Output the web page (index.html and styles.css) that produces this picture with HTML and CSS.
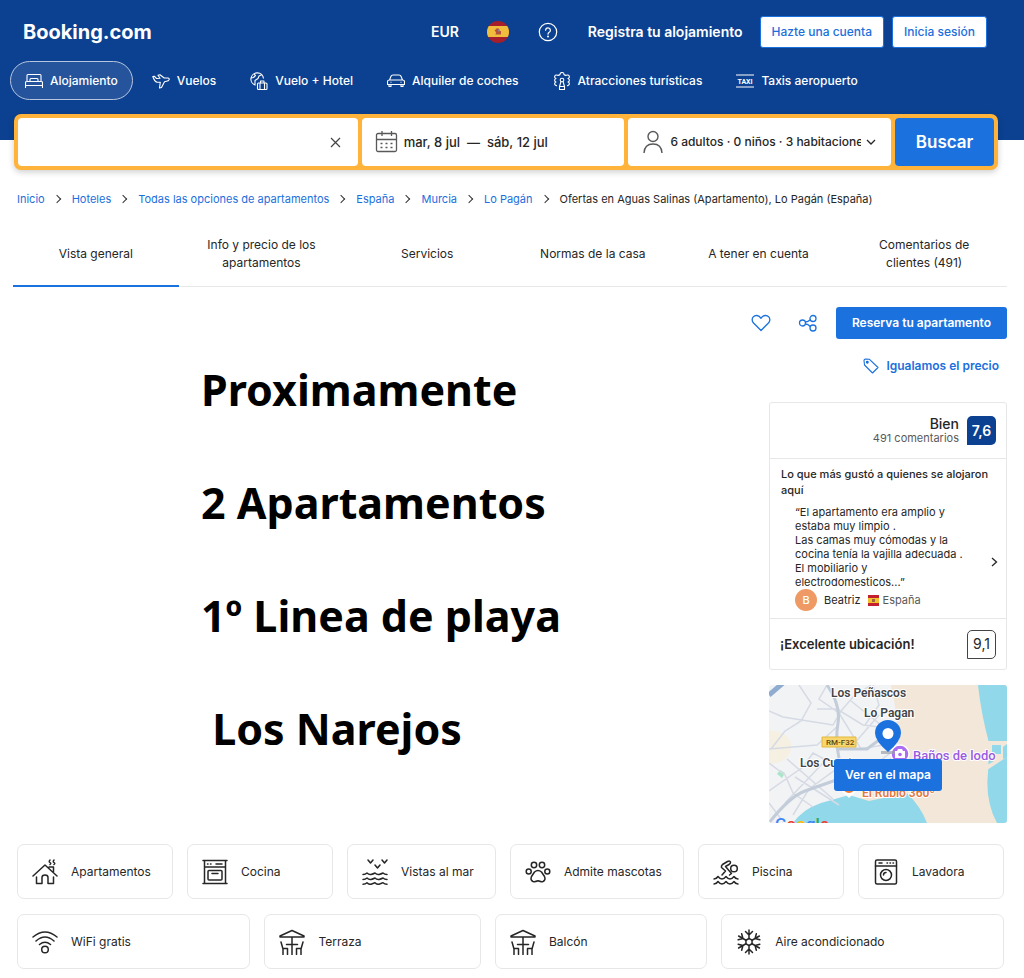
FILE: index.html
```html
<!DOCTYPE html>
<html lang="es">
<head>
<meta charset="utf-8">
<meta name="viewport" content="width=device-width, initial-scale=1">
<title>Aguas Salinas (Apartamento), Lo Pagán (España)</title>
<link rel="stylesheet" href="styles.css">
</head>
<body>
<header class="header">
  <div class="topbar">
    <a class="logo" href="#">Booking.com</a>
    <div class="topbar-actions">
      <button class="plain currency" type="button">EUR</button>
      <button class="plain flag-button" type="button" aria-label="Español">
        <svg width="22" height="22" viewBox="0 0 22 22"><defs><clipPath id="round"><circle cx="11" cy="11" r="11"/></clipPath></defs><g clip-path="url(#round)"><path fill="#a51e2b" d="M0 0h22v22H0z"/><path fill="#f0bd3c" d="M0 5h22v11H0z"/><path fill="#b5543a" d="M7.500 9l1 0 .5-1.500h3l.5 2.500h1.500v3.500H8.500l.5-2z"/><path fill="#8b8399" d="M11 8.500h1.500v2H11z"/></g></svg>
      </button>
      <button class="plain help" type="button" aria-label="Ayuda">
        <svg width="20" height="20" viewBox="0 0 20 20" fill="none" stroke="currentColor" stroke-width="1.2" stroke-linecap="round"><circle cx="10" cy="10" r="8.7"/><path d="M7.6 8.2a2.4 2.4 0 1 1 3.6 2.1c-.8.5-1.2.9-1.2 1.9"/><circle cx="10" cy="14.4" r=".4" fill="currentColor"/></svg>
      </button>
      <a class="register" href="#">Registra tu alojamiento</a>
      <div class="account">
        <a class="account-button" href="#">Hazte una cuenta</a>
        <a class="account-button" href="#">Inicia sesión</a>
      </div>
    </div>
  </div>
  <nav class="products" aria-label="Productos">
    <a class="product product-active" href="#"><svg class="icon-s" viewBox="0 0 18 18"><path d="M.5 16V10.500Q.5 9.500 1.500 9.500H16.500Q17.500 9.500 17.500 10.500V16M.5 13.500H17.500M2 9.500V3.500Q2 2.500 3 2.500H15Q16 2.500 16 3.500V9.500M5 9.500V7.500Q5 6.500 6 6.500H12Q13 6.500 13 7.500V9.500"/></svg>Alojamiento</a>
    <a class="product" href="#"><svg class="icon-s" viewBox="0 0 18 18"><path d="M.8 4.500L2.300 4.200L4.500 6.500L8 6.300L6 3.300L8 2.800L12.200 6L16 6Q17.500 6.300 17.200 7.500Q16.500 9 14.500 9.300L12.500 9.700L9.500 15.500L7.500 16L8.300 10.200L5 10.200Q2.500 9.500 .8 4.500Z"/></svg>Vuelos</a>
    <a class="product" href="#"><svg class="icon-s" viewBox="0 0 18 18"><path d="M5.500 13.200A6.300 6.300 0 1 1 13.500 6.500M4 1.800L5.500 3.500L3.500 5.500L1 6M12 2.500L9 4L8 6.500L5 8.500L5 12.500M8.500 11H16Q17 11 17 12V16.500Q17 17.500 16 17.500H8.500Q7.500 17.500 7.500 16.500V12Q7.500 11 8.500 11ZM10.500 11V9H14V11M10 11.500V17.500M14.500 11.500V17.500"/></svg>Vuelo + Hotel</a>
    <a class="product" href="#"><svg class="icon-s" viewBox="0 0 18 18"><path d="M2.500 8L4 4.300Q4.500 3 6 3H12Q13.500 3 14 4.300L15.500 8M2.500 8H15.500Q17.500 8 17.500 9.500V12.500H.5V9.500Q.5 8 2.500 8ZM2 12.500V14.500H4V12.500M14 12.500V14.500H16V12.500M3.500 10.300H4.500M13.500 10.300H14.500"/></svg>Alquiler de coches</a>
    <a class="product" href="#"><svg class="icon-s" viewBox="0 0 18 18"><path d="M4 13.500A1.800 1.800 0 1 1 3 10A1.800 1.800 0 0 1 3 6.500A1.800 1.800 0 1 1 4.500 3.300Q6 3.500 7 2.500A1.800 1.800 0 1 1 11 2.500Q12 3.500 13.500 3.300A1.800 1.800 0 1 1 15 6.500A1.800 1.800 0 0 1 15 10A1.800 1.800 0 1 1 14 13.500M8 9.500L6.500 14.500V17.500H11.500V14.500L10 9.500M6.500 14.500H11.500"/><circle cx="9" cy="8" r="1.800"/></svg>Atracciones turísticas</a>
    <a class="product" href="#"><svg class="icon-s" viewBox="0 0 18 18"><path d="M0 3H18M0 15H18"/><text x="9" y="12">TAXI</text></svg>Taxis aeropuerto</a>
  </nav>
</header>

<form class="search">
  <div class="field">
    <input class="destination" type="text" aria-label="Destino">
    <button class="plain clear" type="button" aria-label="Borrar"><svg width="11" height="11" viewBox="0 0 11 11" fill="none" stroke="currentColor" stroke-width="1.2"><path d="M1 1l9 9M10 1l-9 9"/></svg></button>
  </div>
  <button class="field field-button" type="button">
    <svg class="field-icon" width="24" height="24" viewBox="0 0 24 24" fill="none" stroke="currentColor" stroke-width="1.3"><rect x="1.500" y="3.500" width="20" height="18" rx="1.500"/><path d="M1.500 9.500h20M7 1v5M16.500 1v5M5.500 13.500h2M10.500 13.500h2M15.500 13.500h2M5.500 17.500h2M10.500 17.500h2M15.500 17.500h2"/></svg>
    <span>mar, 8 jul &nbsp;—&nbsp; sáb, 12 jul</span>
  </button>
  <button class="field field-button" type="button">
    <svg class="field-icon" width="24" height="24" viewBox="0 0 24 24" fill="none" stroke="currentColor" stroke-width="1.4"><circle cx="12" cy="6.500" r="5"/><path d="M3 23q.5-9 9-9t9 9"/></svg>
    <span class="guests">6 adultos · 0 niños · 3 habitaciones</span>
    <svg class="caret" width="10" height="6" viewBox="0 0 10 6" fill="none" stroke="currentColor" stroke-width="1.300"><path d="M1 1l4 4 4-4"/></svg>
  </button>
  <button class="search-submit" type="submit">Buscar</button>
</form>

<main class="page">
  <nav aria-label="Ruta">
    <ol class="breadcrumb">
      <li><a href="#">Inicio</a></li>
      <li><a href="#">Hoteles</a></li>
      <li><a href="#">Todas las opciones de apartamentos</a></li>
      <li><a href="#">España</a></li>
      <li><a href="#">Murcia</a></li>
      <li><a href="#">Lo Pagán</a></li>
      <li>Ofertas en Aguas Salinas (Apartamento), Lo Pagán (España)</li>
    </ol>
  </nav>
  <nav class="tabs" aria-label="Secciones">
    <a class="tab tab-active" href="#">Vista general</a>
    <a class="tab" href="#">Info y precio de los apartamentos</a>
    <a class="tab" href="#">Servicios</a>
    <a class="tab" href="#">Normas de la casa</a>
    <a class="tab" href="#">A tener en cuenta</a>
    <a class="tab" href="#">Comentarios de clientes (491)</a>
  </nav>

  <div class="overview">
    <div class="poster">
      <p>Proximamente</p>
      <p>2 Apartamentos</p>
      <p>1º Linea de playa</p>
      <p>&nbsp;Los Narejos</p>
    </div>
    <aside class="side">
      <div class="actions">
        <button class="plain save" type="button" aria-label="Guardar"><svg width="20" height="18" viewBox="0 0 20 18" fill="none" stroke="currentColor" stroke-width="1.300" stroke-linejoin="round"><path d="M10 16.500L2.300 8.800Q.2 6 2 3.200Q3.600 1.300 6 1.500Q8.500 1.800 10 4.300Q11.500 1.800 14 1.500Q16.400 1.300 18 3.200Q19.800 6 17.700 8.800Z"/></svg></button>
        <button class="plain share" type="button" aria-label="Compartir"><svg width="20" height="18" viewBox="0 0 20 18" fill="none" stroke="currentColor" stroke-width="1.300"><circle cx="4.500" cy="9" r="3"/><circle cx="15" cy="4.500" r="3"/><circle cx="15" cy="14" r="3"/><path d="M7.500 8Q10 8 12.300 5.800M7.500 10Q10 10 12.300 12.500"/></svg></button>
        <button class="reserve" type="button">Reserva tu apartamento</button>
      </div>
      <a class="price-match" href="#"><svg width="16" height="16" viewBox="0 0 16 16" fill="none" stroke="currentColor" stroke-width="1.100" stroke-linejoin="round"><path d="M1 2.500Q1 1 2.500 1L6.500 1.300L15 9.500L9.500 15L1.500 7Z"/><circle cx="4.300" cy="4.300" r=".9" fill="currentColor"/></svg>Igualamos el precio</a>

      <section class="reviews">
        <div class="score-row">
          <div class="score-text"><span class="score-word">Bien</span><span class="score-count">491 comentarios</span></div>
          <span class="score">7,6</span>
        </div>
        <div class="quote-block">
          <h2 class="quote-title">Lo que más gustó a quienes se alojaron aquí</h2>
          <div class="quote-row">
            <blockquote class="quote">“El apartamento era amplio y<br>estaba muy limpio .<br>Las camas muy cómodas y la<br>cocina tenía la vajilla adecuada .<br>El mobiliario y<br>electrodomesticos...”</blockquote>
            <button class="plain next" type="button" aria-label="Siguiente"><svg width="7" height="10" viewBox="0 0 7 10" fill="none" stroke="currentColor" stroke-width="1.300"><path d="M1 1l4.500 4L1 9"/></svg></button>
          </div>
          <div class="author">
            <span class="avatar">B</span>
            <span class="author-name">Beatriz</span>
            <svg width="11" height="11" viewBox="0 0 11 11"><path fill="#c2202e" d="M0 0h11v11H0z"/><path fill="#f3c22f" d="M0 3h11v5H0z"/><path fill="#a5633c" d="M4 4h3v3H4z"/></svg>
            <span class="author-country">España</span>
          </div>
        </div>
        <div class="location-row">
          <span class="location-label">¡Excelente ubicación!</span>
          <span class="location-score">9,1</span>
        </div>
      </section>

      <div class="map">
        <svg class="map-art" viewBox="0 0 238 138" preserveAspectRatio="xMidYMid slice">
          <path fill="#f2f3f5" d="M0 0h238v138H0z"/>
          <path fill="#f6f0e2" d="M0 45q24 3 22 18t-22 16z"/>
          <path fill="#f2e7d8" d="M122 0h116v138H90q-10-15 0-24l40-30q0-50-8-84z"/>
          <path fill="#90d8ea" d="M24 138q10-14 28-20l28-8 20 6 38-8q14 14 20 30zM209 0h29v138h-10q-12-22-9-50 1-18 1-30-8-30-11-58z"/>
          <path fill="#f2e7d8" d="M218 56h20v3l-4 3v12l4-2-20 13-3-3 10-6-4-5z"/>
          <path fill="#90d8ea" d="M223 60h9v9h-9z"/>
          <path fill="#a9e6c9" d="M8 89l3-4 5 3-3 5z"/>
          <g fill="none" stroke="#d5dae4" stroke-width="1.500">
            <path d="M0 26l14 6 50 8 8-14 12-14 18-12M30 0l12 18-10 18-16 10-14 18M48 24h20l26 16 32 4M58 0l-8 14 20 14 22 36 22-4M70 40l-22 20-48 4M104 0l6 20-14 20M82 16l30 24 18 12M0 78l16 12 8 18 20 14M0 106l34-24 10-14 26 14-30 22-16 26M12 134L0 118M26 92l44 28M54 78l-38 40M18 74l46 40M110 30l-26 30M132 60l-48 36"/>
          </g>
          <path d="M58 0q14 20 11 38t1 35M70 64h28l24-18M0 138q20-26 36-32l34-12 60-22" fill="none" stroke="#c3ccd9" stroke-width="3"/>
          <path d="M0 10L14-2" stroke="#8facd0" stroke-width="5"/>
          <path fill="#f8d66b" stroke="#e1b83f" d="M53 52h34v10H53z"/>
          <text class="road" x="57" y="60">RM-F32</text>
          <g class="place">
            <text x="62" y="12">Los Peñascos</text>
            <text x="95" y="32">Lo Pagan</text>
            <text x="31" y="82">Los Cuarteros</text>
            <text class="bath" x="144" y="75">Baños de lodo</text>
            <text class="food" x="93" y="112">El Rubio 360º</text>
          </g>
          <path d="M72 105l8 8 8-8" fill="#fff"/>
          <circle cx="80" cy="102" r="7" fill="#ee7838" stroke="#fff" stroke-width="2"/>
          <circle cx="131" cy="69" r="9" fill="#ac6cf3" stroke="#fff" stroke-width="1.500"/>
          <path fill="#fff" d="M126 66h2l1-2h4l1 2h2v7h-10z"/><circle cx="131" cy="69.500" r="1.800" fill="#ac6cf3"/>
          <path fill="#9aa0a8" opacity=".7" d="M112 66h14v3h-14z"/>
          <path fill="#1b72df" d="M119 67Q106 56 106 48A13 13 0 0 1 132 48Q132 56 119 67Z"/><circle cx="119" cy="48.500" r="5.500" fill="#fff"/>
          <text class="google" x="6" y="145"><tspan fill="#4285f4">G</tspan><tspan fill="#ea4335">o</tspan><tspan fill="#fbbc05">o</tspan><tspan fill="#4285f4">g</tspan><tspan fill="#34a853">l</tspan><tspan fill="#ea4335">e</tspan></text>
        </svg>
        <button class="map-button" type="button">Ver en el mapa</button>
      </div>
    </aside>
  </div>

  <ul class="facilities">
    <li class="facility"><svg class="icon-l" viewBox="0 0 26 26"><path d="M1 17L13 6L25 17M4.500 18V24.500H10V18.500Q10 16 13 16T16 18.500V24.500H21.500V18M17 8H21.500V12.500M18 1q-1.500 1.500 0 2.500t0 2M22 1q-1.500 1.500 0 2.500t0 2"/></svg>Apartamentos</li>
    <li class="facility"><svg class="icon-l" viewBox="0 0 26 26"><path d="M1 1.500H25M2.500 1.500V24M23.500 1.500V24M1 24.500H25M2.500 8H23.500M5.500 5H6M8.500 5H9M14 5H20M7 11.500H19Q20 11.500 20 12.500V20Q20 21 19 21H7Q6 21 6 20V12.500Q6 11.500 7 11.500ZM10 14.500H16"/></svg>Cocina</li>
    <li class="facility"><svg class="icon-l" viewBox="0 0 26 26"><path d="M6 1L8.500 4L11 1M13 6L15.500 9L18 6M20 1L22.500 4L25 1M1 15.500q2.500 0 4-1.500q2 2 4 1.500t4-1.500q2 2 4 1.500t4-1.500q1.500 1.500 4 1.500M1 20.500q2.500 0 4-1.500q2 2 4 1.500t4-1.500q2 2 4 1.500t4-1.500q1.500 1.500 4 1.500M1 25.200q2.500 0 4-1.500q2 2 4 1.500t4-1.500q2 2 4 1.500t4-1.500q1.500 1.500 4 1.500"/></svg>Vistas al mar</li>
    <li class="facility"><svg class="icon-l" viewBox="0 0 26 26"><circle cx="9" cy="6" r="2.700"/><circle cx="17" cy="6" r="2.700"/><circle cx="3.700" cy="12.500" r="2.500"/><circle cx="22.300" cy="12.500" r="2.500"/><path d="M9.500 13Q13 10 16.500 13L19.500 17.500Q21 21 18 22.500Q16 23 13 21.800Q10 23 8 22.500Q5 21 6.500 17.500Z"/></svg>Admite mascotas</li>
    <li class="facility"><svg class="icon-l" viewBox="0 0 26 26"><circle cx="21" cy="9.500" r="3.300"/><path d="M9 16L12.500 12L8.500 8.500Q8 7 9.500 5.500L14.500 2.500Q17 1.500 17.500 3Q17.700 4.500 16 5.500L12.500 7.500L18.500 14.500L16.500 16M1 20q2.500 0 4-2.500q2 2.500 4 2.500t4-2.500q2 2.500 4 2.500t4-2.500q1.500 2.500 4 2.500M1 25q2.500 0 4-2.500q2 2.500 4 2.500t4-2.500q2 2.500 4 2.500t4-2.500q1.500 2.500 4 2.500"/></svg>Piscina</li>
    <li class="facility"><svg class="icon-l" viewBox="0 0 26 26"><rect x="2.500" y="1" width="21" height="24" rx="1.500"/><path d="M2.500 7H23.500M6 4H9M14 4H14.500M17 4H17.500M20 4H20.500M10.500 16Q10.500 13.500 13 13.500"/><circle cx="13" cy="16" r="5.500"/></svg>Lavadora</li>
    <li class="facility"><svg class="icon-l" viewBox="0 0 26 26"><path d="M1 8Q13-2 25 8M4 12Q13 4 22 12M7.500 15.500Q13 11 18.500 15.500"/><circle cx="13" cy="20.500" r="3.300"/></svg>WiFi gratis</li>
    <li class="facility"><svg class="icon-l" viewBox="0 0 26 26"><path d="M1 7L13 1.500L25 7V8H1ZM13 8V25.500M7.500 15.500H18.500M2 13L4 20V25.500M4 19.500H8.500V25.500M24 13L22 20V25.500M22 19.500H17.500V25.500"/></svg>Terraza</li>
    <li class="facility"><svg class="icon-l" viewBox="0 0 26 26"><path d="M1 7L13 1.500L25 7V8H1ZM13 8V25.500M7.500 15.500H18.500M2 13L4 20V25.500M4 19.500H8.500V25.500M24 13L22 20V25.500M22 19.500H17.500V25.500"/></svg>Balcón</li>
    <li class="facility"><svg class="icon-l" viewBox="0 0 26 26"><g id="arm"><path d="M13 9.500V1M9.500 2.500L13 6L16.500 2.500M13 9.500L16 11.200"/></g><use href="#arm" transform="rotate(60 13 13)"/><use href="#arm" transform="rotate(120 13 13)"/><use href="#arm" transform="rotate(180 13 13)"/><use href="#arm" transform="rotate(240 13 13)"/><use href="#arm" transform="rotate(300 13 13)"/></svg>Aire acondicionado</li>
  </ul>
</main>
</body>
</html>
```
FILE: styles.css
```css
* { box-sizing: border-box; }

body {
  margin: 0;
  background: #fff;
  color: #262626;
  font-family: Inter, "Liberation Sans", sans-serif;
  font-size: 12px;
  line-height: 18px;
}

a { color: inherit; text-decoration: none; }
svg { display: block; flex: none; }
button, input { font: inherit; color: inherit; }
button { cursor: pointer; }
.plain { border: 0; padding: 0; background: none; }

.header { height: 140px; background: #0c4191; color: #fff; }
.topbar {
  display: flex;
  justify-content: space-between;
  align-items: center;
  padding: 16px 37px 0 23px;
}
.logo { font-size: 20px; line-height: 28px; font-weight: 700; }
.topbar-actions { display: flex; align-items: center; font-size: 14px; font-weight: 600; }
.currency { margin-right: 28px; }
.flag-button { margin-right: 29px; }
.help { margin-right: 30px; }
.register { margin-right: 17px; }
.account { display: flex; gap: 8px; }
.account-button {
  padding: 6px 11px;
  border: 1px solid #1b72df;
  border-radius: 3px;
  background: #fff;
  color: #1b6fdc;
  font-size: 12px;
  font-weight: 500;
  line-height: 18px;
}

.products { display: flex; gap: 4px; padding: 13px 10px 0; }
.product {
  display: flex;
  align-items: center;
  gap: 7px;
  height: 39px;
  padding: 0 14px;
  border: 1px solid transparent;
  border-radius: 20px;
  font-weight: 500;
  white-space: nowrap;
}
.product-active { border-color: #b6c6de; background: #25549c; }
.icon-s {
  width: 18px;
  height: 18px;
  fill: none;
  stroke: currentColor;
  stroke-width: 1.1;
  stroke-linejoin: round;
}
.icon-s text {
  fill: currentColor;
  stroke: none;
  font-family: Roboto, sans-serif;
  font-size: 7px;
  font-weight: 700;
  text-anchor: middle;
}

.search {
  display: grid;
  grid-template-columns: 340fr 263fr 263fr 99fr;
  gap: 4px;
  margin: -26px 26px 0 14px;
  padding: 4px;
  border-radius: 7px;
  background: #ffb33b;
  box-shadow: 0 2px 6px rgba(0, 0, 0, 0.2);
}
.field {
  display: flex;
  align-items: center;
  height: 48px;
  min-width: 0;
  padding: 0 15px;
  border: 0;
  border-radius: 4px;
  background: #fff;
  font-size: 13px;
  font-weight: 500;
  text-align: left;
  white-space: nowrap;
}
.field-button { gap: 5px; padding-left: 13px; }
.field-icon { color: #595959; }
.destination { flex: 1; min-width: 0; border: 0; outline: 0; background: none; }
.clear { margin-right: 2px; color: #444; }
.guests { flex: 1; min-width: 0; overflow: hidden; font-size: 12px; }
.search-submit {
  border: 0;
  border-radius: 4px;
  background: #1b72df;
  color: #fff;
  font-size: 17px;
  font-weight: 600;
}

.page { padding: 0 17px 0 13px; }
.breadcrumb {
  display: flex;
  flex-wrap: wrap;
  margin: 20px 4px 0;
  padding: 0;
  list-style: none;
  font-size: 11px;
}
.breadcrumb a { color: #1b6fdc; }
.breadcrumb li { display: flex; align-items: center; }
.breadcrumb li + li::before {
  content: "";
  width: 5px;
  height: 5px;
  margin: 0 12px 0 9px;
  border: solid #333;
  border-width: 1px 1px 0 0;
  transform: rotate(45deg);
}

.tabs {
  display: grid;
  grid-template-columns: repeat(6, 1fr);
  margin-top: 14px;
  border-bottom: 1px solid #e7e7e7;
}
.tab {
  display: flex;
  align-items: center;
  justify-content: center;
  height: 65px;
  margin-bottom: -1px;
  padding: 0 24px;
  border-bottom: 2px solid transparent;
  text-align: center;
}
.tab-active { border-color: #1b72df; }

.overview { display: flex; justify-content: space-between; margin-top: 20px; }
.poster {
  padding: 26px 0 0 188px;
  color: #000;
  font-family: "Noto Sans", "Open Sans", sans-serif;
  font-size: 43px;
  font-weight: 700;
  line-height: 113px;
  white-space: nowrap;
}
.poster p { margin: 0; }

.side { display: flex; flex-direction: column; align-items: flex-end; }
.actions { display: flex; align-items: center; color: #1b72df; }
.save { margin-right: 27px; }
.share { margin-right: 18px; }
.reserve {
  height: 32px;
  padding: 0 16px;
  border: 0;
  border-radius: 3px;
  background: #1b72df;
  color: #fff;
  font-weight: 600;
}
.price-match {
  display: flex;
  align-items: center;
  gap: 7px;
  margin: 18px 8px 27px 0;
  color: #1b6fdc;
  font-weight: 600;
}

.reviews { width: 238px; border: 1px solid #e7e7e7; border-radius: 3px; }
.score-row {
  display: flex;
  justify-content: flex-end;
  align-items: center;
  gap: 8px;
  height: 56px;
  padding: 0 10px;
  border-bottom: 1px solid #e7e7e7;
}
.score-text { display: flex; flex-direction: column; text-align: right; }
.score-word { font-size: 14px; line-height: 15px; font-weight: 500; }
.score-count { color: #595959; font-size: 11px; line-height: 14px; }
.score, .location-score {
  display: grid;
  place-items: center;
  width: 29px;
  height: 29px;
  border-radius: 5px 5px 5px 0;
  font-size: 14px;
}
.score { background: #0c4191; color: #fff; font-weight: 600; }
.location-score { border: 1px solid #444; }
.quote-block { padding: 7px 8px 7px 11px; border-bottom: 1px solid #e7e7e7; }
.quote-title { margin: 0; font-size: 11px; line-height: 16px; font-weight: 500; }
.quote-row { display: flex; align-items: flex-end; justify-content: space-between; padding-left: 14px; }
.quote { margin: 7px 0 0; font-size: 11px; line-height: 14px; white-space: nowrap; }
.next { margin-bottom: 22px; }
.author { display: flex; align-items: center; padding-left: 14px; font-size: 11px; }
.avatar {
  display: grid;
  place-items: center;
  width: 22px;
  height: 22px;
  margin-right: 7px;
  border-radius: 50%;
  background: #ef9a65;
  color: #fff;
  font-weight: 500;
}
.author-name { margin-right: 7px; }
.author-country { margin-left: 4px; color: #595959; }
.location-row { display: flex; align-items: center; justify-content: space-between; height: 50px; padding: 0 10px; }
.location-label { font-size: 13px; font-weight: 600; }

.map {
  display: grid;
  width: 238px;
  height: 138px;
  margin-top: 15px;
  overflow: hidden;
  border-radius: 3px;
}
.map-art { grid-area: 1 / 1; width: 100%; height: 100%; }
.map-art text { font-family: Roboto, sans-serif; }
.place text {
  fill: #424549;
  stroke: #fff;
  stroke-width: 2px;
  paint-order: stroke;
  font-size: 12px;
  font-weight: 600;
}
.place .bath { fill: #9a5be0; font-size: 13px; font-weight: 500; }
.place .food { fill: #e2793f; }
.map-art .road { fill: #5a4a16; font-size: 8px; font-weight: 500; }
.map-art .google { font-size: 17px; font-weight: 500; }
.map-button {
  grid-area: 1 / 1;
  z-index: 1;
  justify-self: center;
  align-self: end;
  height: 32px;
  margin-bottom: 32px;
  padding: 0 11px;
  border: 0;
  border-radius: 3px;
  background: #1b72df;
  color: #fff;
  font-weight: 600;
}

.facilities {
  display: flex;
  flex-wrap: wrap;
  gap: 15px 14px;
  margin: 21px 3px 0 4px;
  padding: 0 0 9px;
  list-style: none;
}
.facility {
  display: flex;
  flex: 1 1 auto;
  align-items: center;
  gap: 13px;
  height: 55px;
  min-width: 146px;
  padding: 0 18px 0 14px;
  border: 1px solid #e7e7e7;
  border-radius: 7px;
}
.icon-l {
  width: 26px;
  height: 26px;
  fill: none;
  stroke: #262626;
  stroke-width: 1.5;
  stroke-linecap: round;
  stroke-linejoin: round;
}
```
